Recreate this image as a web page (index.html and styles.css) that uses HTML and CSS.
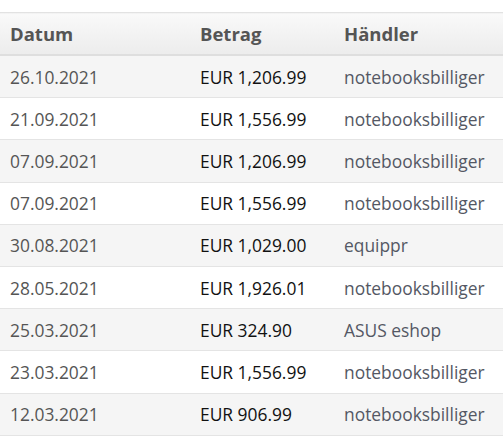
FILE: index.html
```html
<!DOCTYPE html>
<html lang="de">
<head>
<meta charset="utf-8">
<link rel="stylesheet" href="styles.css">
</head>
<body>
<table class="orders">
  <thead>
    <tr><th class="c-date">Datum</th><th class="c-amt">Betrag</th><th class="c-shop">Händler</th></tr>
  </thead>
  <tbody>
    <tr><td class="c-date">26.10.2021</td><td class="c-amt">EUR 1,206.99</td><td class="c-shop">notebooksbilliger</td></tr>
    <tr><td class="c-date">21.09.2021</td><td class="c-amt">EUR 1,556.99</td><td class="c-shop">notebooksbilliger</td></tr>
    <tr><td class="c-date">07.09.2021</td><td class="c-amt">EUR 1,206.99</td><td class="c-shop">notebooksbilliger</td></tr>
    <tr><td class="c-date">07.09.2021</td><td class="c-amt">EUR 1,556.99</td><td class="c-shop">notebooksbilliger</td></tr>
    <tr><td class="c-date">30.08.2021</td><td class="c-amt">EUR 1,029.00</td><td class="c-shop">equippr</td></tr>
    <tr><td class="c-date">28.05.2021</td><td class="c-amt">EUR 1,926.01</td><td class="c-shop">notebooksbilliger</td></tr>
    <tr><td class="c-date">25.03.2021</td><td class="c-amt">EUR 324.90</td><td class="c-shop">ASUS eshop</td></tr>
    <tr><td class="c-date">23.03.2021</td><td class="c-amt">EUR 1,556.99</td><td class="c-shop">notebooksbilliger</td></tr>
    <tr><td class="c-date">12.03.2021</td><td class="c-amt">EUR 906.99</td><td class="c-shop">notebooksbilliger</td></tr>
  </tbody>
</table>
</body>
</html>
```
FILE: styles.css
```css
html, body {
  margin: 0;
  padding: 0;
  background: #fff;
}
body {
  padding-top: 12px;
  font-family: "Open Sans", "Liberation Sans", sans-serif;
  font-size: 17.4px;
  color: #555;
  overflow: hidden;
}
.orders {
  width: 520px;
  border-collapse: collapse;
  border-top: 1px solid #e2e2e2;
}
.orders th {
  text-align: left;
  font-weight: 700;
  font-size: 18.5px;
  color: #555;
  padding: 0 10px;
  height: 41px;
  background: linear-gradient(#f9f9f9, #ececec);
  border-bottom: 2px solid #dedede;
}
.orders td {
  padding: 0 10px;
  height: 41.2px;
  border-bottom: 1px solid #e4e4e4;
  line-height: 22px;
}
.orders tbody tr:nth-child(odd) td {
  background: #f5f5f5;
}
.c-date { width: 170px; }
.c-amt { width: 124px; }
td.c-amt { color: #111; }
td.c-shop { color: #545864; }
```
